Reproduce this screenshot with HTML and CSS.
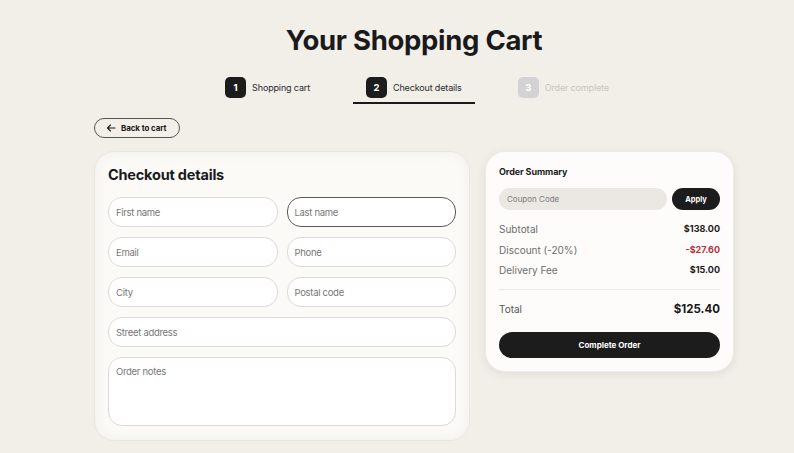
FILE: index.html
```html
<!DOCTYPE html>
<html lang="en">
<head>
<meta charset="utf-8">
<title>Your Shopping Cart</title>
<link rel="stylesheet" href="styles.css">
</head>
<body>
<div class="page">
  <h1 class="title">Your Shopping Cart</h1>
  <div class="steps">
    <div class="step done"><span class="badge">1</span><span class="step-label">Shopping cart</span></div>
    <div class="step active"><span class="badge">2</span><span class="step-label">Checkout details</span></div>
    <div class="step pending"><span class="badge">3</span><span class="step-label">Order complete</span></div>
  </div>
  <div class="back-row">
    <button class="back-btn" type="button">
      <svg class="back-icon" width="10" height="10" viewBox="0 0 10 10" aria-hidden="true"><path d="M9 5H1.5M4.5 2L1.5 5l3 3" fill="none" stroke="#1a1a1a" stroke-width="1.1" stroke-linecap="round" stroke-linejoin="round"/></svg>
      <span>Back to cart</span>
    </button>
  </div>
  <div class="layout">
    <section class="card form-card">
      <h2 class="card-title">Checkout details</h2>
      <div class="form-grid">
        <div class="field">First name</div>
        <div class="field focused">Last name</div>
        <div class="field">Email</div>
        <div class="field">Phone</div>
        <div class="field">City</div>
        <div class="field">Postal code</div>
        <div class="field wide">Street address</div>
        <div class="field wide notes">Order notes</div>
      </div>
    </section>
    <aside class="card summary-card">
      <h3 class="summary-title">Order Summary</h3>
      <div class="coupon-row">
        <div class="coupon">Coupon Code</div>
        <button class="apply" type="button">Apply</button>
      </div>
      <div class="lines">
        <div class="line"><span>Subtotal</span><span class="val">$138.00</span></div>
        <div class="line"><span>Discount (-20%)</span><span class="val red">-$27.60</span></div>
        <div class="line"><span>Delivery Fee</span><span class="val">$15.00</span></div>
      </div>
      <div class="total"><span>Total</span><span class="total-val">$125.40</span></div>
      <button class="complete" type="button">Complete Order</button>
    </aside>
  </div>
</div>
</body>
</html>
```
FILE: styles.css
```css
* { box-sizing: border-box; }
html, body { margin: 0; padding: 0; }
body {
  background: #f2efe9;
  font-family: "Inter", "Noto Sans", sans-serif;
  color: #1a1a1a;
  width: 794px;
  height: 453px;
  overflow: hidden;
}
.page {
  width: 640px;
  margin-left: 94px;
  padding-top: 22px;
}
.title {
  margin: 0;
  text-align: center;
  font-size: 27.5px;
  line-height: 36px;
  font-weight: 700;
  letter-spacing: -0.3px;
}
.steps {
  display: flex;
  justify-content: center;
  gap: 30px;
  margin-top: 19px;
  padding-left: 6px;
}
.step {
  display: flex;
  align-items: center;
  gap: 6px;
  padding: 0 13px 4px;
  border-bottom: 2px solid transparent;
  font-size: 9px;
  letter-spacing: -0.15px;
}
.step.active { border-bottom-color: #1a1a1a; }
.badge {
  width: 21px;
  height: 21px;
  border-radius: 5px;
  background: #1c1c1c;
  color: #fff;
  font-weight: 700;
  font-size: 9.5px;
  letter-spacing: 0;
  display: flex;
  align-items: center;
  justify-content: center;
}
.step-label { color: #2a2a2a; }
.step.pending .badge { background: #d3d3d6; }
.step.pending .step-label { color: #c6c4c2; }
.back-row { margin-top: 14px; }
.back-btn {
  display: flex;
  align-items: center;
  gap: 5px;
  height: 20px;
  padding: 0 13px 0 11px;
  border: 1px solid #555;
  border-radius: 999px;
  background: transparent;
  font-family: inherit;
  font-size: 8px;
  font-weight: 700;
  letter-spacing: -0.1px;
  color: #1a1a1a;
}
.layout {
  display: grid;
  grid-template-columns: 376px 249px;
  gap: 15px;
  margin-top: 13px;
  align-items: start;
}
.card {
  border-radius: 20px;
}
.form-card {
  background: #fbfaf7;
  border: 1px solid #e9e6e0;
  padding: 13px 13px 14px;
  box-shadow: inset 0 0 12px rgba(235,232,226,0.6);
}
.card-title {
  margin: 0 0 12px;
  font-size: 14.5px;
  line-height: 20px;
  font-weight: 700;
  letter-spacing: -0.2px;
}
.form-grid {
  display: grid;
  grid-template-columns: 1fr 1fr;
  column-gap: 9px;
  row-gap: 10px;
}
.field {
  height: 30px;
  border: 1px solid #dcdad6;
  border-radius: 14px;
  background: #fff;
  padding: 0 7px;
  display: flex;
  align-items: center;
  font-size: 9.5px;
  letter-spacing: -0.3px;
  color: #777;
}
.field.focused { border-color: #5a5a5a; }
.field.wide { grid-column: 1 / -1; }
.field.notes {
  height: 69px;
  align-items: flex-start;
  padding-top: 8px;
}
.summary-card {
  background: #fdfcfa;
  padding: 13px 13px 13px;
  box-shadow: 0 2px 10px rgba(0,0,0,0.08);
  border: 1px solid #eeebe6;
}
.summary-title {
  margin: 0;
  font-size: 9px;
  line-height: 14px;
  font-weight: 700;
  letter-spacing: -0.1px;
}
.coupon-row {
  display: flex;
  gap: 5px;
  margin-top: 9px;
}
.coupon {
  flex: 1;
  height: 22px;
  border-radius: 11px;
  background: #ebe8e3;
  font-size: 8px;
  color: #7a7a7a;
  display: flex;
  align-items: center;
  padding-left: 8px;
}
.apply {
  width: 48px;
  height: 22px;
  border: 0;
  border-radius: 11px;
  background: #1c1c1c;
  color: #fff;
  font-family: inherit;
  font-size: 7.5px;
  font-weight: 700;
}
.lines {
  margin-top: 12px;
  display: flex;
  flex-direction: column;
  gap: 6.5px;
  padding-bottom: 12px;
  border-bottom: 1px solid #ebe9e5;
}
.line {
  display: flex;
  justify-content: space-between;
  align-items: center;
  font-size: 10px;
  line-height: 14px;
  color: #6e6e6e;
}
.val { font-weight: 700; color: #1a1a1a; font-size: 9px; }
.val.red { color: #b5333a; }
.total {
  display: flex;
  justify-content: space-between;
  align-items: center;
  margin-top: 11px;
  font-size: 10px;
  line-height: 17px;
  color: #555;
}
.total-val {
  font-size: 11.5px;
  font-weight: 700;
  color: #1a1a1a;
}
.complete {
  display: block;
  width: 100%;
  height: 26px;
  margin-top: 14px;
  border: 0;
  border-radius: 13px;
  background: #1c1c1c;
  color: #fff;
  font-family: inherit;
  font-size: 8px;
  font-weight: 700;
}
```
